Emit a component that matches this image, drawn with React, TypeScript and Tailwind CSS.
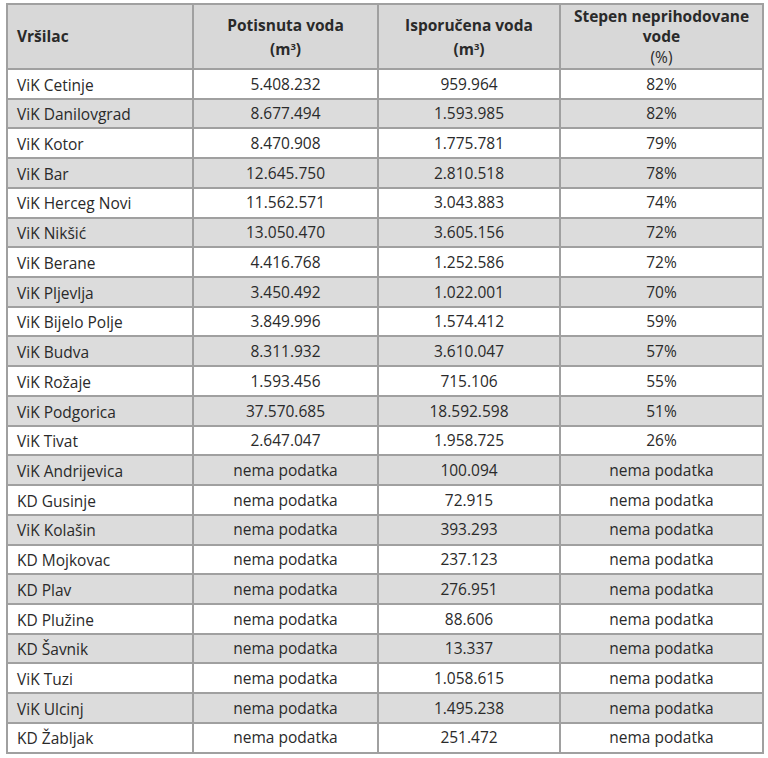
import React from "react";

const rows: [string, string, string, string][] = [
  ["ViK Cetinje", "5.408.232", "959.964", "82%"],
  ["ViK Danilovgrad", "8.677.494", "1.593.985", "82%"],
  ["ViK Kotor", "8.470.908", "1.775.781", "79%"],
  ["ViK Bar", "12.645.750", "2.810.518", "78%"],
  ["ViK Herceg Novi", "11.562.571", "3.043.883", "74%"],
  ["ViK Nikšić", "13.050.470", "3.605.156", "72%"],
  ["ViK Berane", "4.416.768", "1.252.586", "72%"],
  ["ViK Pljevlja", "3.450.492", "1.022.001", "70%"],
  ["ViK Bijelo Polje", "3.849.996", "1.574.412", "59%"],
  ["ViK Budva", "8.311.932", "3.610.047", "57%"],
  ["ViK Rožaje", "1.593.456", "715.106", "55%"],
  ["ViK Podgorica", "37.570.685", "18.592.598", "51%"],
  ["ViK Tivat", "2.647.047", "1.958.725", "26%"],
  ["ViK Andrijevica", "nema podatka", "100.094", "nema podatka"],
  ["KD Gusinje", "nema podatka", "72.915", "nema podatka"],
  ["ViK Kolašin", "nema podatka", "393.293", "nema podatka"],
  ["KD Mojkovac", "nema podatka", "237.123", "nema podatka"],
  ["KD Plav", "nema podatka", "276.951", "nema podatka"],
  ["KD Plužine", "nema podatka", "88.606", "nema podatka"],
  ["KD Šavnik", "nema podatka", "13.337", "nema podatka"],
  ["ViK Tuzi", "nema podatka", "1.058.615", "nema podatka"],
  ["ViK Ulcinj", "nema podatka", "1.495.238", "nema podatka"],
  ["KD Žabljak", "nema podatka", "251.472", "nema podatka"],
];

export default function App() {
  return (
    <div
      className="w-[768px] h-[758px] bg-white overflow-hidden pt-[3px] pl-[6px] text-[#2a2a2a]"
      style={{ fontFamily: '"Open Sans", "Noto Sans", sans-serif' }}
    >
      <table className="border-collapse table-fixed w-[756px] text-[15.5px]">
        <colgroup>
          <col className="w-[186px]" />
          <col className="w-[185px]" />
          <col className="w-[182px]" />
          <col className="w-[203px]" />
        </colgroup>
        <thead>
          <tr className="h-[65px] bg-[#d8d8d8]">
            <th className="border-2 border-[#a0a0a0] p-0 text-left pl-[9px] font-bold">Vršilac</th>
            <th className="border-2 border-[#a0a0a0] p-0 text-center font-bold leading-[24px]">
              Potisnuta voda
              <br />
              (m<sup className="text-[9.5px]">3</sup>)
            </th>
            <th className="border-2 border-[#a0a0a0] p-0 text-center font-bold leading-[24px]">
              Isporučena voda
              <br />
              (m<sup className="text-[9.5px]">3</sup>)
            </th>
            <th className="border-2 border-[#a0a0a0] p-0 text-center font-bold leading-[20.5px]">
              Stepen neprihodovane
              <br />
              vode
              <br />
              <span className="font-normal">(%)</span>
            </th>
          </tr>
        </thead>
        <tbody>
          {rows.map((r, i) => (
            <tr key={i} className={(i % 2 === 1 ? "bg-[#dcdcdc]" : "bg-white") + " h-[29.73px]"}>
              <td className="border-2 border-[#a0a0a0] p-0 pl-[9px] pt-[3px] leading-none">{r[0]}</td>
              <td className="border-2 border-[#a0a0a0] p-0 text-center pt-[1px] leading-none">{r[1]}</td>
              <td className="border-2 border-[#a0a0a0] p-0 text-center pt-[1px] leading-none">{r[2]}</td>
              <td className="border-2 border-[#a0a0a0] p-0 text-center pt-[1px] leading-none">{r[3]}</td>
            </tr>
          ))}
        </tbody>
      </table>
    </div>
  );
}
